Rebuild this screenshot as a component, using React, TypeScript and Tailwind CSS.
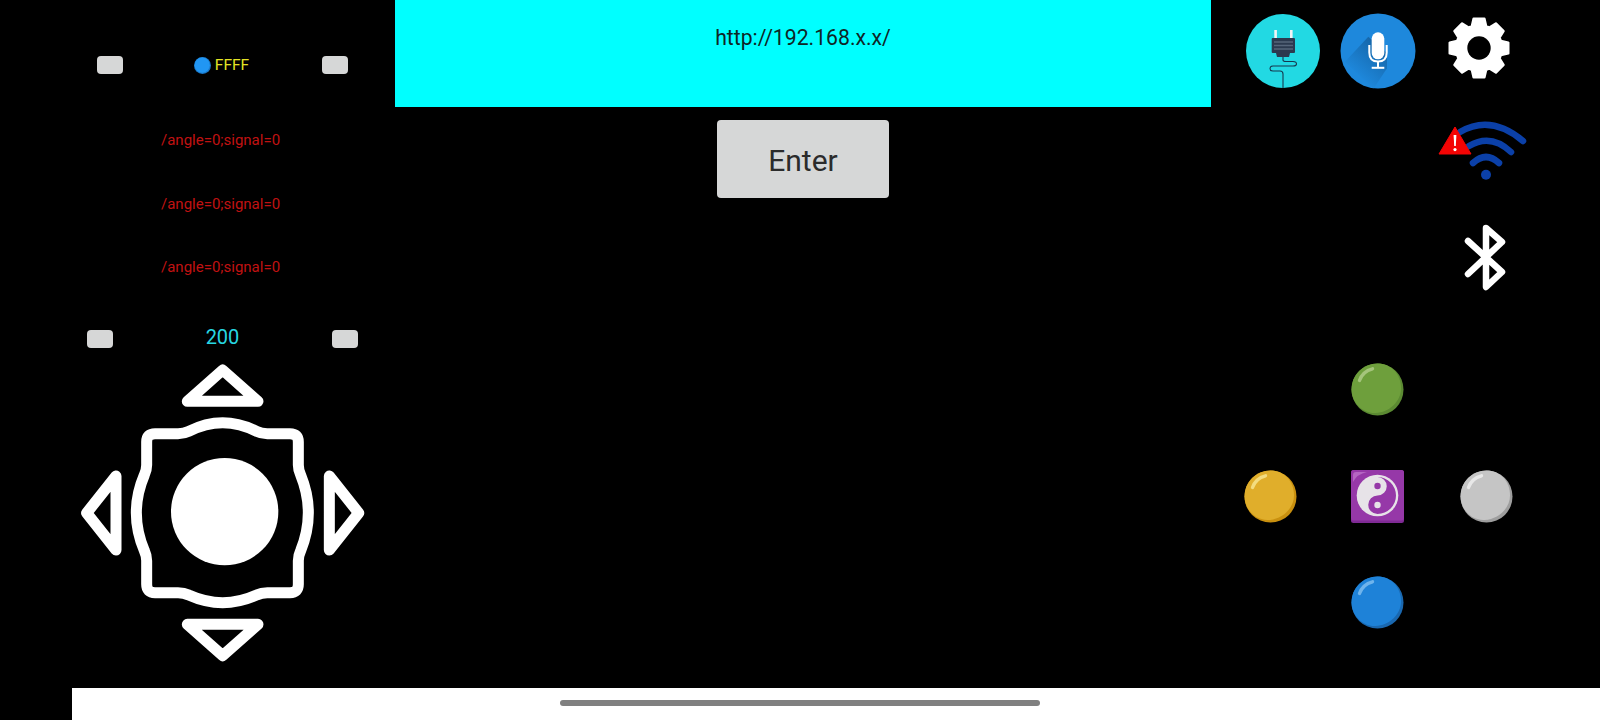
import React from 'react';

const font = 'font-["Roboto",sans-serif]';

// 8 tooth gear, centre 31,31
function gearPath() {
  const pts: string[] = [];
  for (let k = 0; k < 8; k++) {
    const t = k * 45 - 90;
    [[-18, 23], [-10.5, 29.8], [10.5, 29.8], [18, 23]].forEach(([a, r]) => {
      const rad = ((t + a) * Math.PI) / 180;
      pts.push(`${(31 + r * Math.cos(rad)).toFixed(2)},${(31 + r * Math.sin(rad)).toFixed(2)}`);
    });
  }
  return `M${pts.join('L')}Z`;
}

function SmallButton() {
  return <div className="w-[26px] h-[18px] rounded-[4px] bg-[#d6d7d7]" />;
}

function SignalLine({ className }: { className: string }) {
  return (
    <p className={`${className} h-[20px] ml-[161px] w-[130px] text-[15px] leading-[20px] text-[#c01212] whitespace-nowrap`}>
      /angle=0;signal=0
    </p>
  );
}

function Joystick() {
  return (
    <svg width="320" height="320" viewBox="0 0 960 960" className="ml-[60px]" fill="none" stroke="#fff" strokeWidth="33" strokeLinejoin="round" strokeLinecap="round">
      <path d="M382 154L594 154L488 60Z" />
      <path d="M382 823L594 823L488 917Z" />
      <path d="M168 378L168 600L80 489Z" />
      <path d="M808 378L808 600L896 489Z" />
      <path d="M386 244Q488 192 590 244Q604 251 622 251L690 251Q715 251 715 276L715 345Q715 360 722 375Q768 488 722 602Q715 617 715 632L715 703Q715 728 690 728L622 728Q604 728 590 735Q488 781 386 735Q372 728 354 728L285 728Q260 728 260 703L260 632Q260 617 253 602Q205 488 253 375Q260 360 260 345L260 276Q260 251 285 251L354 251Q372 251 386 244Z" />
      <circle cx="494" cy="485" r="161" fill="#fff" stroke="none" />
    </svg>
  );
}

function Plug() {
  return (
    <svg width="74" height="74" viewBox="0 0 74 74" className="mt-[1px]">
      <circle cx="37" cy="37" r="37" fill="#22d9e3" />
      <rect x="28.3" y="16" width="2.6" height="9" fill="#f2f4f5" />
      <rect x="44" y="16" width="2.6" height="9" fill="#f2f4f5" />
      <rect x="25.7" y="24" width="23.3" height="15" rx="1" fill="#2c3a4f" />
      <path d="M30 39H44L43 43H31Z" fill="#2c3a4f" />
      <path d="M28 28H47M28 31.5H47M28 35H47" stroke="#56657a" strokeWidth="1.4" />
      <path d="M37 43V46Q37 47.5 40 47.5H47Q50.5 47.5 50.5 50Q50.5 52 47 52H27Q24 52 24 54.5Q24 57 27 57H34Q37 57 37 60V74" fill="none" stroke="#17384f" strokeWidth="1.1" />
    </svg>
  );
}

function Mic() {
  return (
    <svg width="76" height="76" viewBox="0 0 76 76">
      <defs>
        <linearGradient id="micShadow" gradientUnits="userSpaceOnUse" x1="40" y1="35" x2="16" y2="62">
          <stop offset="0" stopColor="#1668ac" />
          <stop offset="1" stopColor="#1e88dc" />
        </linearGradient>
        <clipPath id="micClip">
          <circle cx="38" cy="38" r="37.5" />
        </clipPath>
      </defs>
      <circle cx="38" cy="38" r="37.5" fill="#1e88dc" />
      <path d="M28.3 23.7L5 48.7L33.3 76L47 55.3L47 40Z" fill="url(#micShadow)" clipPath="url(#micClip)" />
      <rect x="31.7" y="19.3" width="12.6" height="27" rx="6.3" fill="#fff" />
      <path d="M29.3 32V39.5Q29.3 48.5 38 48.5Q46.7 48.5 46.7 39.5V32" fill="none" stroke="#fff" strokeWidth="2" />
      <rect x="37" y="48" width="2" height="6" fill="#fff" />
      <rect x="31.7" y="53.8" width="12.6" height="2" fill="#fff" />
    </svg>
  );
}

function Gear() {
  return (
    <svg width="62" height="62" viewBox="0 0 62 62" className="mt-[4px]">
      <path d={gearPath()} fill="#fff" stroke="#fff" strokeWidth="2.4" strokeLinejoin="round" />
      <circle cx="31" cy="31" r="11.7" fill="#000" />
    </svg>
  );
}

function Wifi() {
  return (
    <svg width="94" height="62" viewBox="1436 120 94 62" className="ml-[225px] mt-[31px]">
      <g fill="none" stroke="#0b40a8" strokeWidth="6.5" strokeLinecap="round">
        <path d="M1460 132Q1491 114 1523 141" />
        <path d="M1469 146Q1491 133 1511 152" />
        <path d="M1473 163Q1486 151 1499 163" />
      </g>
      <circle cx="1486" cy="174.7" r="5" fill="#0b40a8" />
      <path d="M1455 127L1471 154H1439Z" fill="#f40404" stroke="#f40404" strokeWidth="1" strokeLinejoin="round" />
      <path d="M1453.6 135H1456.4L1455.8 146H1454.2Z" fill="#fff" />
      <circle cx="1455" cy="149.6" r="1.6" fill="#fff" />
    </svg>
  );
}

function Bluetooth() {
  return (
    <svg width="48" height="68" viewBox="1462 224 48 68" className="ml-[251px] mt-[41px]">
      <path d="M1468 242L1502 273L1486 288L1486 229L1502 243L1468 275" fill="none" stroke="#fff" strokeWidth="6.5" strokeLinejoin="round" strokeLinecap="round" />
    </svg>
  );
}

function Ball({ base, edge, shine }: { base: string; edge: string; shine: string }) {
  return (
    <svg width="53" height="53" viewBox="0 0 53 53">
      <circle cx="26.5" cy="26.5" r="26" fill={edge} />
      <path d="M26.5 .5C12 .5 .5 12 .5 26.5C.5 39 11 50.5 24.5 50C38 49.5 50 38.5 50 25.5C50 11 40 .5 26.5 .5Z" fill={base} />
      <path d="M8.5 17.5C10.5 11.5 15 7.5 21.5 5.8" fill="none" stroke={shine} strokeWidth="3.4" strokeLinecap="round" />
    </svg>
  );
}

function YinYang() {
  return (
    <svg width="53" height="53" viewBox="0 0 53 53">
      <rect x="0" y="0" width="53" height="53" rx="2.5" fill="#7f2a95" />
      <rect x="0" y="0" width="53" height="50.5" rx="2.5" fill="#9638a8" />
      <path d="M2 12V5Q2 2 5 2H16Q6 4 2 12Z" fill="#b565c3" />
      <circle cx="26.5" cy="25.5" r="20.8" fill="#e7e3e8" />
      <path d="M26.5 7A9.25 9.25 0 0 1 26.5 25.5A9.25 9.25 0 0 0 26.5 44A18.5 18.5 0 0 0 26.5 7Z" fill="#9638a8" />
      <circle cx="26.5" cy="16" r="3.2" fill="#9638a8" />
      <circle cx="26.5" cy="35" r="3.2" fill="#e7e3e8" />
    </svg>
  );
}

export default function App() {
  return (
    <div className={`${font} w-full h-screen bg-black overflow-hidden`}>
      <div className="flex h-[688px]">
        {/* Left column: speed, signal readouts and joystick */}
        <div className="w-[395px] shrink-0 pt-[56px]">
          <div className="ml-[97px] w-[251px] flex items-center justify-between">
            <SmallButton />
            <div className="flex items-center gap-[4px] mr-[2px]">
              <svg width="17" height="17" viewBox="0 0 17 17">
                <circle cx="8.5" cy="8.5" r="8.5" fill="#1a78c8" />
                <circle cx="8.2" cy="8.2" r="7.6" fill="#2196f3" />
              </svg>
              <span className="text-[15.5px] leading-[18px] text-[#e3e324]">FFFF</span>
            </div>
            <SmallButton />
          </div>
          <SignalLine className="mt-[56px]" />
          <SignalLine className="mt-[44px]" />
          <SignalLine className="mt-[43px]" />
          <div className="mt-[53px] ml-[87px] w-[271px] flex items-center justify-between">
            <SmallButton />
            <span className="text-[20px] leading-[18px] -mt-[4px] text-[#27d7e2]">200</span>
            <SmallButton />
          </div>
          <div className="mt-[2px]">
            <Joystick />
          </div>
        </div>

        {/* Address bar */}
        <div className="w-[816px] shrink-0 flex flex-col items-center">
          <div className="w-full h-[107px] bg-[#00ffff] pt-[24px] text-center text-[21.2px] leading-[28px] text-[#0f2626]">
            http://192.168.x.x/
          </div>
          <button className="mt-[13px] w-[172px] h-[78px] pt-[2px] rounded-[4px] bg-[#d6d7d7] text-[30px] text-[#2b2b2b]">
            Enter
          </button>
        </div>

        {/* Right column: status icons and action buttons */}
        <div className="flex-1 pt-[13px]">
          <div className="flex items-start pl-[35px]">
            <Plug />
            <div className="ml-[20px]">
              <Mic />
            </div>
            <div className="ml-[32px]">
              <Gear />
            </div>
          </div>
          <Wifi />
          <Bluetooth />
          <div className="mt-[72px] ml-[33px] grid grid-cols-[107px_109px_53px] grid-rows-[107px_106px_53px]">
            <div />
            <Ball base="#6e9f3c" edge="#5b8a32" shine="#a5c57c" />
            <div />
            <Ball base="#e0ae2b" edge="#c9900f" shine="#f3dc80" />
            <YinYang />
            <Ball base="#c5c5c5" edge="#9e9e9e" shine="#e8e8e8" />
            <div />
            <Ball base="#1e82d8" edge="#1a68b0" shine="#6fb4ec" />
            <div />
          </div>
        </div>
      </div>

      {/* Navigation bar */}
      <div className="ml-[72px] h-[32px] bg-white pt-[12px]">
        <div className="ml-[488px] w-[480px] h-[6px] rounded-full bg-[#808080]" />
      </div>
    </div>
  );
}
